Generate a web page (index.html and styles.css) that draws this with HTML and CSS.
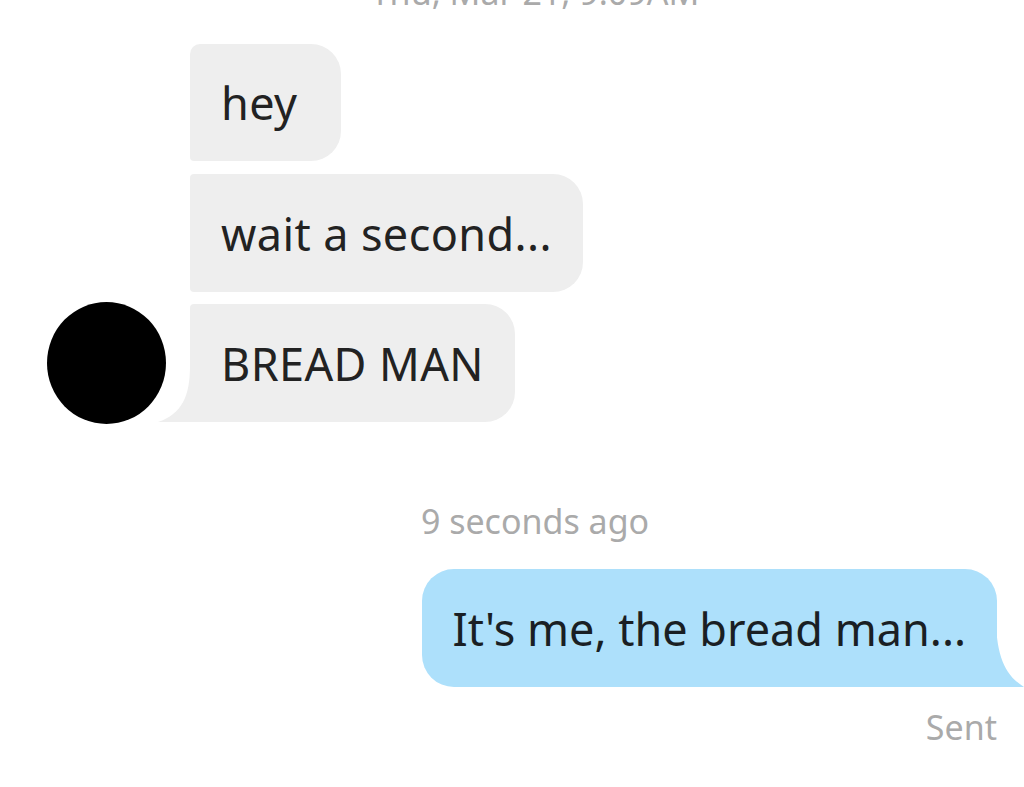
FILE: index.html
```html
<!DOCTYPE html>
<html lang="en">
<head>
  <meta charset="UTF-8">
  <meta name="viewport" content="width=device-width, initial-scale=1.0">
  <title>Messages</title>
  <link rel="stylesheet" href="styles.css">
</head>
<body>
  <div class="thread">
    <div class="stamp stamp-top">Thu, Mar 21, 9:09AM</div>

    <div class="group incoming">
      <div class="row">
        <div class="avatar-slot"></div>
        <div class="bubble first">hey</div>
      </div>
      <div class="row">
        <div class="avatar-slot"></div>
        <div class="bubble">wait a second...</div>
      </div>
      <div class="row">
        <div class="avatar-slot"><div class="avatar"></div></div>
        <div class="bubble last">
          BREAD MAN
          <svg class="tail tail-left" width="34" height="56" viewBox="0 0 34 56"><path d="M32 0 C32 30 24 48 0 56 L34 56 L34 0 Z" fill="#eeeeee"/></svg>
        </div>
      </div>
    </div>

    <div class="stamp stamp-recent">9 seconds ago</div>

    <div class="group outgoing">
      <div class="bubble mine">
        It's me, the bread man...
        <svg class="tail tail-right" width="30" height="70" viewBox="0 0 30 70"><path d="M2 0 C2 36 10 58 30 70 L0 70 L0 0 Z" fill="#ade0fb"/></svg>
      </div>
      <div class="status">Sent</div>
    </div>
  </div>
</body>
</html>
```

FILE: styles.css
```css
body {
  margin: 0;
  background: #fff;
  font-family: "Noto Sans", "Open Sans", sans-serif;
  color: #222;
  overflow: hidden;
}
.thread {
  display: flex;
  flex-direction: column;
}
.stamp {
  color: #aaa;
  font-size: 34px;
  text-align: center;
  padding-left: 46px;
  line-height: 40px;
}
.stamp-top {
  margin-top: -28px;
  margin-bottom: 32px;
}
.stamp-recent {
  margin-top: 79px;
  margin-bottom: 28px;
}
.group {
  display: flex;
  flex-direction: column;
  gap: 12px;
}
.row {
  display: flex;
  align-items: center;
  gap: 24px;
  padding-left: 47px;
}
.row:nth-child(2) {
  margin-top: 1px;
}
.avatar-slot {
  width: 119px;
  flex-shrink: 0;
}
.avatar {
  width: 119px;
  height: 122px;
  margin: -2px 0;
  border-radius: 50%;
  background: #000;
}
.bubble {
  position: relative;
  height: 118px;
  display: flex;
  align-items: center;
  padding: 0 31px;
  font-size: 45px;
  letter-spacing: 0.4px;
  background: #eeeeee;
  border-radius: 4px 30px 30px 4px;
  white-space: nowrap;
}
.bubble.first {
  height: 117px;
  padding-right: 44px;
  border-top-left-radius: 10px;
}
.bubble.last {
  border-bottom-left-radius: 0;
}
.tail {
  position: absolute;
  bottom: 0;
}
.tail-left {
  left: -32px;
}
.tail-right {
  right: -27px;
}
.outgoing {
  align-items: flex-end;
  padding-right: 27px;
  gap: 0;
}
.bubble.mine {
  background: #ade0fb;
  border-radius: 32px 32px 0 32px;
  color: #1a1f24;
  letter-spacing: 0;
}
.status {
  color: #aaa;
  font-size: 34px;
  margin-top: 17px;
}
```
